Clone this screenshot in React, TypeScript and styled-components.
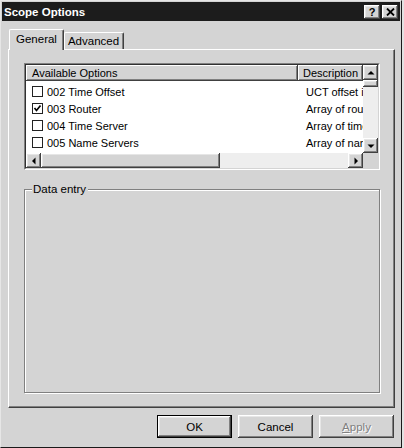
import React from 'react';
import styled, { createGlobalStyle, css } from 'styled-components';

const BG = '#d4d4d4';

const Global = createGlobalStyle`
  html, body { margin: 0; padding: 0; background: #e2e2e2; }
  body {
    font-family: "Liberation Sans", Arial, sans-serif;
    font-size: 11px;
    color: #000;
  }
  * { box-sizing: border-box; }
`;

const raised = css`
  background: ${BG};
  box-shadow: inset -1px -1px #404040, inset 1px 1px #ffffff, inset -2px -2px #808080, inset 2px 2px #e6e6e6;
`;

const Window = styled.div`
  width: 402px;
  height: 448px;
  background: ${BG};
  border: 1px solid;
  border-color: #e6e6e6 #1a1a1a #1a1a1a #e6e6e6;
  padding: 1px;
  display: flex;
  flex-direction: column;
`;

const TitleBar = styled.div`
  height: 19px;
  flex: none;
  background: #1c1c1c;
  color: #fff;
  display: flex;
  align-items: center;
  justify-content: space-between;
  padding: 0 2px 0 2px;
`;

const TitleText = styled.span`
  font-weight: bold;
  font-size: 11.5px;
`;

const TitleButtons = styled.div`
  display: flex;
  gap: 2px;
`;

const TitleButton = styled.div`
  ${raised};
  width: 16px;
  height: 14px;
  display: flex;
  align-items: center;
  justify-content: center;
  font-weight: bold;
  font-size: 11px;
  color: #000;
`;

const Body = styled.div`
  flex: 1;
  display: flex;
  flex-direction: column;
  padding: 8px 5px 8px 6px;
`;

const TabStrip = styled.div`
  height: 20px;
  display: flex;
  align-items: flex-end;
  padding-left: 1px;
  position: relative;
  z-index: 1;
`;

const Tab = styled.div<{ $active?: boolean }>`
  background: ${BG};
  border-left: 1px solid #fff;
  border-top: 1px solid #fff;
  border-right: 1px solid #404040;
  box-shadow: inset -1px 0 #808080;
  border-top-left-radius: 2px;
  border-top-right-radius: 2px;
  display: flex;
  align-items: center;
  height: ${(p) => (p.$active ? '21px' : '17px')};
  margin-bottom: ${(p) => (p.$active ? '-1px' : '0')};
  padding: ${(p) => (p.$active ? '0 6px 3px 6px' : '0 4px 1px 3px')};
  font-size: 11.5px;
`;

const Panel = styled.div`
  height: 359px;
  border: 1px solid;
  border-color: #fff #404040 #404040 #fff;
  box-shadow: inset -1px -1px #808080;
  display: flex;
  flex-direction: column;
  padding: 13px 14px 13px 15px;
`;

const ListFrame = styled.div`
  height: 107px;
  flex: none;
  border: 1px solid;
  border-color: #808080 #fff #fff #808080;
`;

const ListInner = styled.div`
  height: 100%;
  border: 1px solid;
  border-color: #303030 #d4d4d4 #d4d4d4 #303030;
  display: grid;
  grid-template-columns: 1fr 15px;
  grid-template-rows: 1fr 15px;
  background: #fff;
`;

const ListView = styled.div`
  overflow: hidden;
  background: #fff;
`;

const Columns = css`
  display: grid;
  grid-template-columns: 272px 65px;
`;

const HeaderRow = styled.div`
  ${Columns};
  height: 16px;
`;

const HeaderCell = styled.div<{ $pad: number }>`
  ${raised};
  box-shadow: inset -1px -1px #404040, inset 1px 1px #ffffff, inset -2px -2px #808080;
  display: flex;
  align-items: center;
  padding-left: ${(p) => p.$pad}px;
  white-space: nowrap;
  overflow: hidden;
`;

const Rows = styled.div`
  padding-top: 2px;
`;

const Row = styled.div`
  ${Columns};
  height: 17px;
  align-items: center;
`;

const NameCell = styled.div`
  display: flex;
  align-items: center;
  gap: 4px;
  padding-left: 6px;
  white-space: nowrap;
`;

const DescCell = styled.div`
  padding-left: 8px;
  white-space: nowrap;
  overflow: hidden;
`;

const Check = styled.div`
  width: 11px;
  height: 11px;
  border: 1px solid #222;
  background: #fff;
  display: flex;
  align-items: center;
  justify-content: center;
`;

const VScroll = styled.div`
  display: flex;
  flex-direction: column;
`;

const HScroll = styled.div`
  display: flex;
`;

const ScrollButton = styled.div`
  ${raised};
  width: 15px;
  height: 15px;
  flex: none;
  display: flex;
  align-items: center;
  justify-content: center;
`;

const Thumb = styled.div<{ $size: number; $vertical?: boolean }>`
  ${raised};
  flex: none;
  ${(p) => (p.$vertical ? `height: ${p.$size}px;` : `width: ${p.$size}px;`)}
`;

const Track = styled.div`
  flex: 1;
  background: #eeeeee;
`;

const Corner = styled.div`
  background: ${BG};
`;

const GroupBox = styled.fieldset`
  flex: 1;
  min-width: 0;
  margin: 13px 0 1px 0;
  padding: 0 7px;
  border: 1px solid #808080;
  box-shadow: 1px 1px 0 #fff, inset 1px 1px 0 #fff;
`;

const Legend = styled.legend`
  padding: 0 2px 0 1px;
  background: ${BG};
  font-size: 11.5px;
`;

const ButtonRow = styled.div`
  display: flex;
  justify-content: flex-end;
  gap: 6px;
  margin-top: 7px;
  padding-right: 1px;
`;

const Button = styled.div<{ $default?: boolean; $disabled?: boolean }>`
  ${raised};
  width: 75px;
  height: 23px;
  display: flex;
  align-items: center;
  justify-content: center;
  font-size: 11.5px;
  ${(p) =>
    p.$default &&
    css`
      border: 1px solid #000;
    `}
  ${(p) =>
    p.$disabled &&
    css`
      color: #808080;
      text-shadow: 1px 1px 0 #fff;
    `}
`;

const Mnemonic = styled.span`
  text-decoration: underline;
`;

const Arrow = ({ dir }: { dir: 'up' | 'down' | 'left' | 'right' }) => {
  const pts = {
    up: '0.5,5.5 4,2 7.5,5.5',
    down: '0.5,2.5 4,6 7.5,2.5',
    left: '5.5,0.5 2,4 5.5,7.5',
    right: '2.5,0.5 6,4 2.5,7.5',
  }[dir];
  return (
    <svg width="8" height="8" viewBox="0 0 8 8">
      <polygon points={pts} fill="#000" />
    </svg>
  );
};

const CheckMark = () => (
  <svg width="9" height="9" viewBox="0 0 9 9">
    <polyline points="1.5,4 3.5,6.5 7.5,1.5" fill="none" stroke="#000" strokeWidth="1.7" />
  </svg>
);

const CloseGlyph = () => (
  <svg width="9" height="8" viewBox="0 0 9 8">
    <path d="M1 0.5 L8 7.5 M8 0.5 L1 7.5" stroke="#000" strokeWidth="1.8" />
  </svg>
);

const options = [
  { code: '002 Time Offset', desc: 'UCT offset in seconds', checked: false },
  { code: '003 Router', desc: 'Array of router addresses', checked: true },
  { code: '004 Time Server', desc: 'Array of time server addresses', checked: false },
  { code: '005 Name Servers', desc: 'Array of name servers', checked: false },
];

export default function App() {
  return (
    <>
      <Global />
      <Window>
        <TitleBar>
          <TitleText>Scope Options</TitleText>
          <TitleButtons>
            <TitleButton>?</TitleButton>
            <TitleButton>
              <CloseGlyph />
            </TitleButton>
          </TitleButtons>
        </TitleBar>
        <Body>
          <TabStrip>
            <Tab $active>General</Tab>
            <Tab>Advanced</Tab>
          </TabStrip>
          <Panel>
            <ListFrame>
              <ListInner>
                <ListView>
                  <HeaderRow>
                    <HeaderCell $pad={6}>Available Options</HeaderCell>
                    <HeaderCell $pad={5}>Description</HeaderCell>
                  </HeaderRow>
                  <Rows>
                    {options.map((o) => (
                      <Row key={o.code}>
                        <NameCell>
                          <Check>{o.checked && <CheckMark />}</Check>
                          {o.code}
                        </NameCell>
                        <DescCell>{o.desc}</DescCell>
                      </Row>
                    ))}
                  </Rows>
                </ListView>
                <VScroll>
                  <ScrollButton>
                    <Arrow dir="up" />
                  </ScrollButton>
                  <Thumb $vertical $size={7} />
                  <Track />
                  <ScrollButton>
                    <Arrow dir="down" />
                  </ScrollButton>
                </VScroll>
                <HScroll>
                  <ScrollButton>
                    <Arrow dir="left" />
                  </ScrollButton>
                  <Thumb $size={179} />
                  <Track />
                  <ScrollButton>
                    <Arrow dir="right" />
                  </ScrollButton>
                </HScroll>
                <Corner />
              </ListInner>
            </ListFrame>
            <GroupBox>
              <Legend>Data entry</Legend>
            </GroupBox>
          </Panel>
          <ButtonRow>
            <Button $default>OK</Button>
            <Button>Cancel</Button>
            <Button $disabled>
              <span>
                <Mnemonic>A</Mnemonic>pply
              </span>
            </Button>
          </ButtonRow>
        </Body>
      </Window>
    </>
  );
}
